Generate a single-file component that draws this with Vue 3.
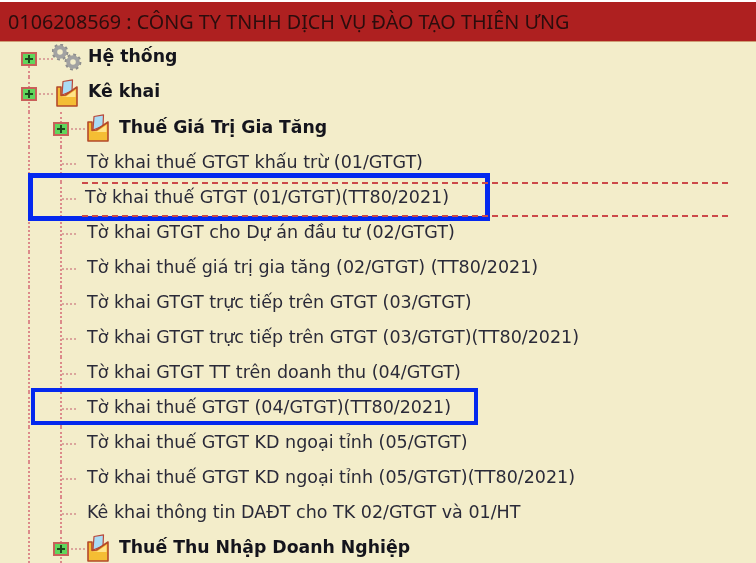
<script setup>
const rows = [
  { type: 'root', icon: 'gears', text: 'Hệ thống', first: true },
  { type: 'root', icon: 'folder', text: 'Kê khai' },
  { type: 'group', text: 'Thuế Giá Trị Gia Tăng' },
  { type: 'leaf', text: 'Tờ khai thuế GTGT khấu trừ (01/GTGT)' },
  { type: 'leaf', text: 'Tờ khai thuế GTGT (01/GTGT)(TT80/2021)', nudge: true },
  { type: 'leaf', text: 'Tờ khai GTGT cho Dự án đầu tư (02/GTGT)' },
  { type: 'leaf', text: 'Tờ khai thuế giá trị gia tăng (02/GTGT) (TT80/2021)' },
  { type: 'leaf', text: 'Tờ khai GTGT trực tiếp trên GTGT (03/GTGT)' },
  { type: 'leaf', text: 'Tờ khai GTGT trực tiếp trên GTGT (03/GTGT)(TT80/2021)' },
  { type: 'leaf', text: 'Tờ khai GTGT TT trên doanh thu (04/GTGT)' },
  { type: 'leaf', text: 'Tờ khai thuế GTGT (04/GTGT)(TT80/2021)' },
  { type: 'leaf', text: 'Tờ khai thuế GTGT KD ngoại tỉnh (05/GTGT)' },
  { type: 'leaf', text: 'Tờ khai thuế GTGT KD ngoại tỉnh (05/GTGT)(TT80/2021)' },
  { type: 'leaf', text: 'Kê khai thông tin DAĐT cho TK 02/GTGT và 01/HT' },
  { type: 'group', text: 'Thuế Thu Nhập Doanh Nghiệp' },
]
</script>

<template>
  <div class="page">
    <header class="title">0106208569 : CÔNG TY TNHH DỊCH VỤ ĐÀO TẠO THIÊN ƯNG</header>
    <ul class="tree">
      <li v-for="(row, i) in rows" :key="i" class="row" :class="row.type">
        <span class="col" :class="row.first ? 'half' : 'line'">
          <span v-if="row.type === 'root'" class="box"><span class="plus"></span></span>
        </span>
        <span v-if="row.type !== 'root'" class="col line">
          <span v-if="row.type === 'group'" class="box"><span class="plus"></span></span>
          <span v-else class="dash"></span>
        </span>
        <template v-if="row.type !== 'leaf'">
          <svg v-if="row.icon === 'gears'" class="icon gears" viewBox="0 0 30 28" width="30" height="28">
            <g fill="none">
              <circle cx="8" cy="8" r="4.8" stroke="#a2a2a2" stroke-width="4" />
              <circle cx="8" cy="8" r="7.4" stroke="#8e8e8e" stroke-width="2" stroke-dasharray="2.9 2.9" />
              <circle cx="21" cy="18" r="4.8" stroke="#a2a2a2" stroke-width="4" />
              <circle cx="21" cy="18" r="7.4" stroke="#8e8e8e" stroke-width="2" stroke-dasharray="2.9 2.9" />
            </g>
          </svg>
          <svg v-else class="icon folder" viewBox="0 0 22 28" width="22" height="28">
            <path d="M7 2.5 L16.5 0.8 L16 12 L6 16 Z" fill="#a9dcf5" stroke="#b8483a" stroke-width="1.2" stroke-linejoin="round" />
            <path d="M1 8 H5 V16.5 L9.5 16 L21 8 V27 H1 Z" fill="#f4bd34" stroke="#b4492a" stroke-width="1.6" stroke-linejoin="round" />
            <path d="M2.5 18 L10 17.5 L19.5 11 V18 Z" fill="#ffe48a" />
          </svg>
        </template>
        <span class="label" :class="{ nudge: row.nudge }">{{ row.text }}</span>
      </li>
    </ul>
    <div class="mark mark-one"></div>
    <div class="mark mark-two"></div>
    <div class="rule rule-top"></div>
    <div class="rule rule-bottom"></div>
  </div>
</template>

<style scoped>
.page {
  position: relative;
  width: 756px;
  height: 563px;
  overflow: hidden;
  background: #f3edca;
  font-family: "DejaVu Sans", sans-serif;
}
.title {
  box-sizing: border-box;
  height: 42px;
  border-top: 2px solid #fff;
  border-bottom: 1px solid #cf9c74;
  padding-left: 8px;
  background: #ae2020;
  color: #2b0d0d;
  font-family: "Noto Sans", sans-serif;
  font-size: 19.8px;
  line-height: 39px;
  white-space: nowrap;
  filter: blur(0.4px);
}
.tree {
  margin: 0;
  padding: 0 0 0 28px;
  list-style: none;
  filter: blur(0.4px);
}
.row {
  display: flex;
  align-items: center;
  height: 35px;
  white-space: nowrap;
}
.col {
  position: relative;
  flex: none;
  align-self: stretch;
  width: 32px;
}
.col + .col,
.root .col {
  width: 0;
}
.line::before,
.half::before {
  content: "";
  position: absolute;
  left: 0;
  top: 0;
  bottom: 0;
  border-left: 2px dotted #dc8a8a;
}
.half::before {
  top: 24px;
}
.box {
  position: absolute;
  z-index: 1;
  left: -7px;
  top: 10px;
  width: 16px;
  height: 14px;
  box-sizing: border-box;
  border: 2px solid #c9605a;
  background: #5fd65c;
}
.box::after {
  content: "";
  position: absolute;
  left: 16px;
  top: 4px;
  width: 14px;
  border-top: 2px dotted #dba59c;
}
.plus {
  position: absolute;
  left: 2px;
  top: 1px;
  width: 8px;
  height: 8px;
  background:
    linear-gradient(#1d4a1d, #1d4a1d) center / 8px 2px no-repeat,
    linear-gradient(#1d4a1d, #1d4a1d) center / 2px 8px no-repeat;
}
.dash {
  position: absolute;
  left: 2px;
  top: 16px;
  width: 14px;
  border-top: 2px dotted #dba59c;
}
.icon {
  flex: none;
  margin-bottom: 3px;
}
.gears {
  margin-left: 24px;
  margin-right: 6px;
}
.root .folder {
  margin-left: 28px;
  margin-right: 10px;
}
.group .folder {
  margin-left: 27px;
  margin-right: 10px;
}
.label {
  padding-bottom: 5px;
  color: #2a2a38;
  font-size: 17.5px;
  line-height: 24px;
}
.leaf .label {
  margin-left: 27px;
}
.leaf .label.nudge {
  margin-left: 25px;
}
.root .label,
.group .label {
  color: #14141c;
  font-weight: 700;
  font-size: 17.3px;
}
.root .label {
  padding-bottom: 8px;
}
.mark {
  position: absolute;
  box-sizing: border-box;
  border: 5px solid #0428ee;
}
.mark-one {
  left: 28px;
  top: 173px;
  width: 462px;
  height: 48px;
}
.mark-two {
  left: 31px;
  top: 388px;
  width: 447px;
  height: 37px;
  border-width: 4px;
}
.rule {
  position: absolute;
  left: 82px;
  width: 646px;
  border-top: 2px dashed #cc4a4a;
}
.rule-top {
  top: 182px;
}
.rule-bottom {
  top: 215px;
}
</style>
